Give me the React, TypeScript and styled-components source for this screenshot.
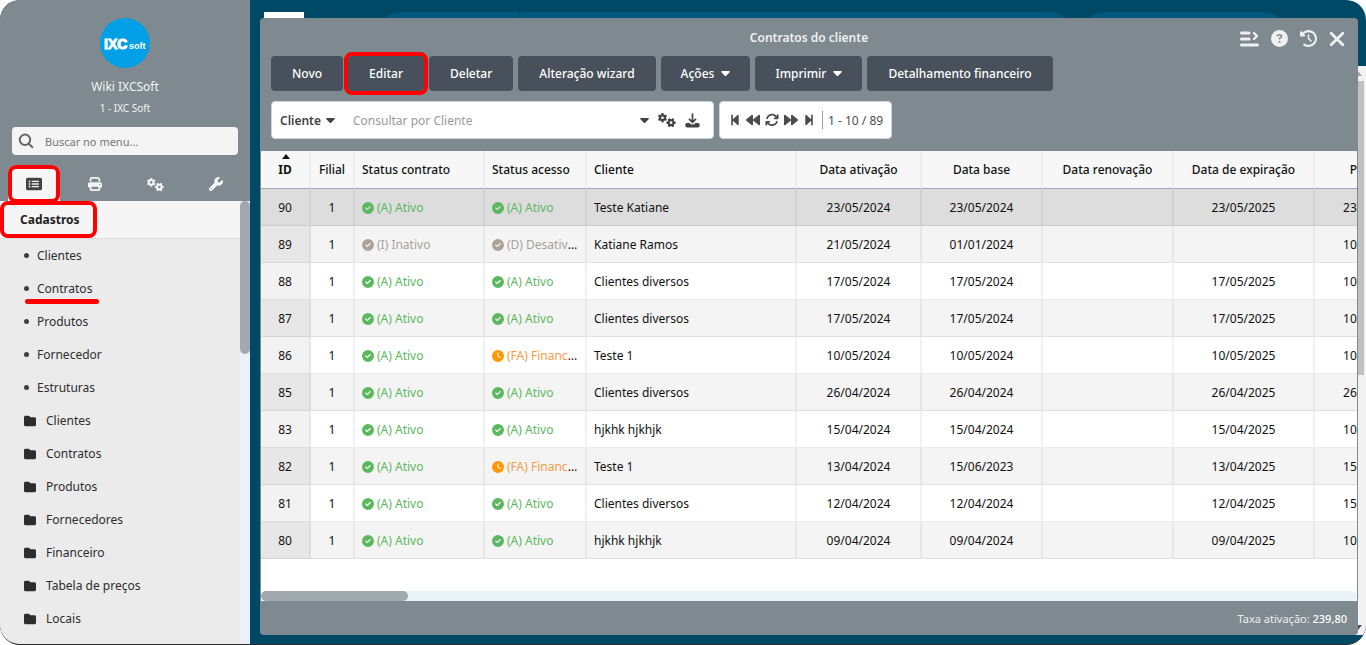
import React from "react";
import styled, { createGlobalStyle, css } from "styled-components";
import { FaBackward, FaForward, FaStepBackward, FaStepForward } from "react-icons/fa";
import { FaArrowsRotate, FaCircleCheck, FaCircleQuestion, FaClock, FaClockRotateLeft, FaFolder, FaGears, FaPrint, FaRectangleList, FaWrench } from "react-icons/fa6";

const GlobalStyle = createGlobalStyle`
  * { box-sizing: border-box; }
  body { margin: 0; background: #fff; font-family: "Noto Sans", "Open Sans", sans-serif; font-size: 12px; line-height: 16px; color: #111; }
  button, input, select { font: inherit; color: inherit; }
  ul { list-style: none; margin: 0; padding: 0; }
  h1, h2, p { margin: 0; }
`;

const Shell = styled.div`
  display: flex;
  height: 100vh;
  overflow: hidden;
  border-radius: 20px;
  border-bottom: 1px solid #2b2b2b;
  background: #004966;
`;

const Sidebar = styled.aside`
  display: flex;
  flex-direction: column;
  flex: 0 0 250px;
  background: #7e8a8f;
`;

const Profile = styled.div`
  display: flex;
  flex-direction: column;
  align-items: center;
  padding: 18px 12px 11px;
  color: #f4f4f4;
  text-align: center;
`;

const ProfileName = styled.h1`
  margin-top: 11px;
  font-size: 12px;
  line-height: 16px;
  font-weight: 400;
`;

const ProfileUnit = styled.p`
  margin-top: 5px;
  font-size: 10px;
  line-height: 16px;
`;

const SearchBox = styled.label`
  display: flex;
  align-items: center;
  gap: 11px;
  height: 28px;
  margin: 0 12px;
  padding: 0 6px;
  border-radius: 4px;
  background: #f4f4f4;
  color: #666;
`;

const PlainInput = styled.input`
  flex: 1;
  min-width: 0;
  padding: 2px 0 0;
  border: 0;
  outline: 0;
  background: transparent;
  &::placeholder { color: #999; opacity: 1; }
`;

const MenuInput = styled(PlainInput)`
  font-size: 11px;
  &::placeholder { color: #757575; }
`;

const Tabs = styled.nav`
  display: flex;
  justify-content: space-between;
  align-items: flex-end;
  height: 46px;
  padding: 0 8px;
`;

const Tab = styled.button<{ $active?: boolean }>`
  position: relative;
  display: grid;
  place-items: center;
  width: 52px;
  height: 36px;
  padding: 2px 0 0;
  border: 0;
  background: ${(p) => (p.$active ? "#f5f5f5" : "transparent")};
  color: ${(p) => (p.$active ? "#444" : "#f5f5f5")};
  border-radius: 8px 8px 0 0;
`;

const Highlight = styled.span`
  position: absolute;
  inset: 0;
  z-index: 2;
  border: 4px solid #f00;
  border-radius: 8px;
  pointer-events: none;
`;

const TabHighlight = styled(Highlight)`
  bottom: -2px;
`;

const ButtonHighlight = styled(Highlight)`
  inset: -4px;
`;

const MenuArea = styled.div`
  position: relative;
  display: flex;
  flex: 1;
  min-height: 0;
`;

const MenuScroll = styled.div`
  flex: 1;
  min-width: 0;
  overflow: hidden;
  background: #ebebeb;
`;

const MenuTitle = styled.h2`
  height: 38px;
  border-bottom: 1px solid #dcdcdc;
  background: #f5f5f5;
  font-size: 12px;
  line-height: 37px;
  font-weight: 700;
  color: #222;
`;

const TitleMark = styled.span`
  position: relative;
  display: inline-block;
  padding: 0 17px 0 20px;
`;

const MenuLink = styled.a<{ $folder?: boolean }>`
  display: flex;
  align-items: center;
  gap: ${(p) => (p.$folder ? 10 : 8)}px;
  height: 33px;
  padding-left: 24px;
  color: #2d2d2d;
  text-decoration: none;
`;

const Dot = styled.span`
  width: 5px;
  height: 5px;
  border-radius: 50%;
  background: #3f3f3f;
`;

const Marked = styled.span`
  position: relative;
`;

const Underline = styled.span`
  position: absolute;
  left: -12px;
  right: -7px;
  bottom: -7px;
  height: 5px;
  border-radius: 3px;
  background: #f00;
`;

const MenuRail = styled.div`
  flex: 0 0 10px;
  background: #e9f2f6;
`;

const MenuThumb = styled.div`
  height: 153px;
  border-radius: 5px;
  background: #a0a9ae;
`;

const Main = styled.main`
  position: relative;
  display: flex;
  flex: 1;
  min-width: 0;
  padding: 18px 8px 9px 10px;
`;

const Pill = styled.div<{ $left: number; $width: number }>`
  position: absolute;
  top: 12px;
  left: ${(p) => p.$left}px;
  width: ${(p) => p.$width}px;
  height: 40px;
  border-radius: 20px;
  background: #005780;
`;

const PillDivider = styled.span`
  display: block;
  width: 1px;
  height: 40px;
  margin-left: 139px;
  background: #00496b;
`;

const BrandBlock = styled.div`
  position: absolute;
  top: 12px;
  left: 14px;
  width: 40px;
  height: 40px;
  background: #fff;
`;

const PageRail = styled.div`
  position: absolute;
  top: 66px;
  right: 0;
  bottom: 9px;
  display: flex;
  flex-direction: column;
  align-items: center;
  width: 16px;
  padding: 5px 0;
  background: #f2f2f2;
`;

const PageThumb = styled.div`
  flex: 0 0 294px;
  width: 12px;
  margin: 5px 0 auto;
  background: #c1c1c1;
`;

const RailArrow = styled.svg<{ $dark?: boolean }>`
  flex: none;
  fill: ${(p) => (p.$dark ? "#505050" : "#a3a3a3")};
`;

const Window = styled.section`
  position: relative;
  display: flex;
  flex-direction: column;
  flex: 1;
  min-width: 0;
  border-radius: 4px;
  background: #7e8a8f;
  overflow: hidden;
`;

const TitleBar = styled.header`
  position: relative;
  flex: none;
  height: 38px;
  padding-top: 12px;
  text-align: center;
  color: #f0f0f0;
`;

const WindowTitle = styled.h2`
  font-size: 12px;
  line-height: 16px;
  font-weight: 600;
`;

const WindowActions = styled.div`
  position: absolute;
  top: 12px;
  right: 13px;
  display: flex;
  align-items: center;
  gap: 12px;
`;

const IconButton = styled.button`
  display: grid;
  place-items: center;
  padding: 0;
  border: 0;
  background: transparent;
  color: inherit;
`;

const Toolbar = styled.div`
  display: flex;
  gap: 5px;
  padding: 0 11px;
`;

const ToolButton = styled.button<{ $menu?: boolean }>`
  position: relative;
  display: flex;
  align-items: center;
  gap: 7px;
  height: 35px;
  padding: 0 ${(p) => (p.$menu ? 20 : 21)}px;
  border: 0;
  border-radius: 4px;
  background: #47505b;
  color: #fff;
  font-weight: 500;
  white-space: nowrap;
`;

const Filters = styled.div`
  display: flex;
  gap: 5px;
  padding: 10px 11px 12px;
`;

const panel = css`
  display: flex;
  align-items: center;
  height: 38px;
  border: 1px solid #d0d4d6;
  border-radius: 4px;
  background: #fff;
  color: #444;
`;

const SearchPanel = styled.div`
  ${panel}
  flex: 0 1 443px;
  gap: 9px;
  padding: 0 13px 0 8px;
`;

const FieldPicker = styled.label`
  display: flex;
  align-items: center;
  gap: 4px;
  margin-right: 9px;
`;

const FieldSelect = styled.select`
  appearance: none;
  padding: 2px 0 0;
  border: 0;
  background: transparent;
  font-weight: 600;
`;

const Pager = styled.div`
  ${panel}
  gap: 5px;
  padding: 0 8px 0 9px;
  color: #4c4c4c;
`;

const PageCount = styled.span`
  margin-left: 2px;
  padding: 2px 0 0 5px;
  border-left: 1px solid #999;
`;

const TableArea = styled.div`
  display: flex;
  flex-direction: column;
  flex: 1;
  min-height: 0;
  margin: 0 1px;
  background: #fff;
`;

const TableClip = styled.div`
  flex: 1;
  min-height: 0;
  overflow: hidden;
`;

const Grid = styled.table`
  width: 1176px;
  table-layout: fixed;
  border-collapse: separate;
  border-spacing: 0;
`;

const Th = styled.th<{ $left?: boolean; $sorted?: boolean }>`
  position: relative;
  height: 38px;
  padding: ${(p) => (p.$left ? "0 5px 0 7px" : "0 7px")};
  border-right: 2px solid #ececec;
  border-bottom: 1px solid #9aa7ac;
  background: #f7f7f7;
  font-weight: ${(p) => (p.$sorted ? 700 : 500)};
  text-align: ${(p) => (p.$left ? "left" : "center")};
  white-space: nowrap;
`;

const SortMark = styled.svg`
  position: absolute;
  top: 3px;
  left: 21px;
  fill: #111;
`;

const Td = styled.td<{ $left?: boolean }>`
  height: 37px;
  padding: ${(p) => (p.$left ? "2px 5px 0 7px" : "2px 7px 0")};
  border-right: 2px solid rgba(0, 0, 0, 0.05);
  border-bottom: 1px solid rgba(0, 0, 0, 0.08);
  text-align: ${(p) => (p.$left ? "left" : "center")};
  white-space: nowrap;
  overflow: hidden;
  text-overflow: ellipsis;
`;

const Row = styled.tr<{ $selected?: boolean }>`
  background: #fff;
  &:nth-child(even) { background: #f4f4f4; }
  ${(p) => p.$selected && css`background: #ddd;`}
  & > td:first-child { background: ${(p) => (p.$selected ? "#ddd" : "rgba(0, 0, 0, 0.05)")}; }
`;

const tones = { green: "#5cb860", grey: "#aba397", orange: "#ff9800" };
const textTones = { green: "#5cb860", grey: "#a8a29b", orange: "#f79b45" };
type Tone = keyof typeof tones;

const StatusText = styled.span<{ $tone: Tone }>`
  color: ${(p) => textTones[p.$tone]};
  svg { margin-right: 3px; vertical-align: -2px; color: ${(p) => tones[p.$tone]}; }
`;

const HRail = styled.div`
  flex: none;
  height: 10px;
  border-radius: 5px;
  background: #e9f2f6;
`;

const HThumb = styled.div`
  width: 147px;
  height: 10px;
  border-radius: 5px;
  background: #a0a9ae;
`;

const Footer = styled.footer`
  flex: none;
  height: 34px;
  padding: 10px 11px 0;
  color: #eee;
  font-size: 11px;
  line-height: 16px;
  text-align: right;
  strong { font-weight: 500; color: #fff; }
`;

const Logo = () => (
  <svg width="50" height="50" viewBox="0 0 50 50" role="img" aria-label="IXCsoft">
    <circle cx="25" cy="25" r="25" fill="#009fe6" />
    <text x="4" y="31" fill="#fff" stroke="#fff" strokeWidth="1" fontFamily="Liberation Sans, sans-serif" fontWeight="700" fontSize="14">IXC</text>
    <text x="29" y="31" fill="#fff" fontFamily="Liberation Sans, sans-serif" fontWeight="700" fontSize="9">soft</text>
  </svg>
);

const SearchIcon = () => (
  <svg width="16" height="16" viewBox="0 0 16 16" fill="none" stroke="currentColor" strokeWidth="2" strokeLinecap="round">
    <circle cx="7" cy="6.8" r="5.2" /><path d="M10.8 10.8l3.6 3.4" />
  </svg>
);

const Caret = () => (
  <svg width="9" height="5" viewBox="0 0 9 5" fill="currentColor"><path d="M.9 0h7.2c.7 0 1 .7.5 1.2L5.2 4.7a1 1 0 0 1-1.4 0L.4 1.2C-.1.7.2 0 .9 0z" /></svg>
);

const ListNextIcon = () => (
  <svg width="19" height="16" viewBox="0 0 19 16" fill="none" stroke="currentColor" strokeWidth="3" strokeLinecap="round" strokeLinejoin="round">
    <path d="M1.5 2h7.5M1.5 8h7.5M1.5 14h16" /><path d="M14 2l3 3-3 3" strokeWidth="2.4" />
  </svg>
);

const CloseIcon = () => (
  <svg width="16" height="16" viewBox="0 0 16 16" stroke="currentColor" strokeWidth="2.8" strokeLinecap="round"><path d="M2.2 2.2l11.6 11.6M13.8 2.2L2.2 13.8" /></svg>
);

const DownloadIcon = () => (
  <svg width="15" height="15" viewBox="0 0 15 15" fill="none" stroke="currentColor">
    <path d="M7.5.5v8.5M4 5.8l3.5 3.5L11 5.8" strokeWidth="1.7" />
    <path d="M2 10.5h2.6l1.5 1.4h2.8l1.5-1.4H13a1.2 1.2 0 0 1 1.2 1.2v1A1.2 1.2 0 0 1 13 14H2a1.2 1.2 0 0 1-1.2-1.2v-1A1.2 1.2 0 0 1 2 10.5z" fill="currentColor" strokeWidth="1" />
  </svg>
);

const links = ["Clientes", "Contratos", "Produtos", "Fornecedor", "Estruturas"];
const folders = ["Clientes", "Contratos", "Produtos", "Fornecedores", "Financeiro", "Tabela de preços", "Locais"];
const widths = [50, 44, 130, 102, 210, 125, 121, 131, 141, 122];

type Contract = { id: number; status: [Tone, string]; access: [Tone, string]; client: string; start: string; base: string; expiry: string; next: string };
const active: [Tone, string] = ["green", "(A) Ativo"];
const blocked: [Tone, string] = ["orange", "(FA) Financeiro"];
const contracts: Contract[] = [
  { id: 90, status: active, access: active, client: "Teste Katiane", start: "23/05/2024", base: "23/05/2024", expiry: "23/05/2025", next: "23/05/2024" },
  { id: 89, status: ["grey", "(I) Inativo"], access: ["grey", "(D) Desativado"], client: "Katiane Ramos", start: "21/05/2024", base: "01/01/2024", expiry: "", next: "10/05/2024" },
  { id: 88, status: active, access: active, client: "Clientes diversos", start: "17/05/2024", base: "17/05/2024", expiry: "17/05/2025", next: "10/05/2024" },
  { id: 87, status: active, access: active, client: "Clientes diversos", start: "17/05/2024", base: "17/05/2024", expiry: "17/05/2025", next: "10/05/2024" },
  { id: 86, status: active, access: blocked, client: "Teste 1", start: "10/05/2024", base: "10/05/2024", expiry: "10/05/2025", next: "10/05/2024" },
  { id: 85, status: active, access: active, client: "Clientes diversos", start: "26/04/2024", base: "26/04/2024", expiry: "26/04/2025", next: "26/05/2024" },
  { id: 83, status: active, access: active, client: "hjkhk hjkhjk", start: "15/04/2024", base: "15/04/2024", expiry: "15/04/2025", next: "10/05/2024" },
  { id: 82, status: active, access: blocked, client: "Teste 1", start: "13/04/2024", base: "15/06/2023", expiry: "13/04/2025", next: "15/05/2024" },
  { id: 81, status: active, access: active, client: "Clientes diversos", start: "12/04/2024", base: "12/04/2024", expiry: "12/04/2025", next: "15/05/2024" },
  { id: 80, status: active, access: active, client: "hjkhk hjkhjk", start: "09/04/2024", base: "09/04/2024", expiry: "09/04/2025", next: "10/05/2024" },
];

const Status = ({ value: [tone, label] }: { value: [Tone, string] }) => (
  <StatusText $tone={tone}>{tone === "orange" ? <FaClock size={12} /> : <FaCircleCheck size={12} />}{label}</StatusText>
);

export default function App() {
  return (
    <>
      <GlobalStyle />
      <Shell>
        <Sidebar>
          <Profile>
            <Logo />
            <ProfileName>Wiki IXCSoft</ProfileName>
            <ProfileUnit>1 - IXC Soft</ProfileUnit>
          </Profile>
          <SearchBox>
            <SearchIcon />
            <MenuInput aria-label="Buscar no menu" placeholder="Buscar no menu..." />
          </SearchBox>
          <Tabs>
            <Tab $active aria-label="Menu"><FaRectangleList size={16} /><TabHighlight /></Tab>
            <Tab aria-label="Imprimir"><FaPrint size={14} /></Tab>
            <Tab aria-label="Configurações"><FaGears size={17} /></Tab>
            <Tab aria-label="Ferramentas"><FaWrench size={14} /></Tab>
          </Tabs>
          <MenuArea>
            <MenuScroll>
              <MenuTitle><TitleMark>Cadastros<Highlight /></TitleMark></MenuTitle>
              <ul>
                {links.map((name) => (
                  <li key={name}><MenuLink href="#"><Dot /><Marked>{name}{name === "Contratos" && <Underline />}</Marked></MenuLink></li>
                ))}
                {folders.map((name) => (
                  <li key={name}><MenuLink href="#" $folder><FaFolder size={12} />{name}</MenuLink></li>
                ))}
              </ul>
            </MenuScroll>
            <MenuRail><MenuThumb /></MenuRail>
          </MenuArea>
        </Sidebar>
        <Main>
          <BrandBlock />
          <Pill $left={130} $width={690}><PillDivider /></Pill>
          <Pill $left={834} $width={200} />
          <PageRail>
            <RailArrow width="8" height="5" viewBox="0 0 8 5"><path d="M4 0l4 5H0z" /></RailArrow>
            <PageThumb />
            <RailArrow $dark width="8" height="5" viewBox="0 0 8 5"><path d="M0 0h8L4 5z" /></RailArrow>
          </PageRail>
          <Window>
            <TitleBar>
              <WindowTitle>Contratos do cliente</WindowTitle>
              <WindowActions>
                <IconButton aria-label="Opções"><ListNextIcon /></IconButton>
                <IconButton aria-label="Ajuda"><FaCircleQuestion size={17} /></IconButton>
                <IconButton aria-label="Histórico"><FaClockRotateLeft size={17} /></IconButton>
                <IconButton aria-label="Fechar"><CloseIcon /></IconButton>
              </WindowActions>
            </TitleBar>
            <Toolbar>
              <ToolButton>Novo</ToolButton>
              <ToolButton>Editar<ButtonHighlight /></ToolButton>
              <ToolButton>Deletar</ToolButton>
              <ToolButton>Alteração wizard</ToolButton>
              <ToolButton $menu>Ações <Caret /></ToolButton>
              <ToolButton $menu>Imprimir <Caret /></ToolButton>
              <ToolButton>Detalhamento financeiro</ToolButton>
            </Toolbar>
            <Filters>
              <SearchPanel>
                <FieldPicker>
                  <FieldSelect aria-label="Campo"><option>Cliente</option></FieldSelect>
                  <Caret />
                </FieldPicker>
                <PlainInput aria-label="Consultar por Cliente" placeholder="Consultar por Cliente" />
                <IconButton aria-label="Abrir lista"><Caret /></IconButton>
                <IconButton aria-label="Configurar"><FaGears size={18} /></IconButton>
                <IconButton aria-label="Baixar"><DownloadIcon /></IconButton>
              </SearchPanel>
              <Pager>
                <IconButton aria-label="Primeira"><FaStepBackward size={12} /></IconButton>
                <IconButton aria-label="Anterior"><FaBackward size={14} /></IconButton>
                <IconButton aria-label="Atualizar"><FaArrowsRotate size={14} /></IconButton>
                <IconButton aria-label="Próxima"><FaForward size={14} /></IconButton>
                <IconButton aria-label="Última"><FaStepForward size={12} /></IconButton>
                <PageCount>1 - 10 / 89</PageCount>
              </Pager>
            </Filters>
            <TableArea>
              <TableClip>
                <Grid>
                  <colgroup>{widths.map((w, i) => <col key={i} width={w} />)}</colgroup>
                  <thead>
                    <tr>
                      <Th $sorted><SortMark width="8" height="5" viewBox="0 0 8 5"><path d="M4 0l4 5H0z" /></SortMark>ID</Th>
                      <Th>Filial</Th>
                      <Th $left>Status contrato</Th>
                      <Th $left>Status acesso</Th>
                      <Th $left>Cliente</Th>
                      <Th>Data ativação</Th>
                      <Th>Data base</Th>
                      <Th>Data renovação</Th>
                      <Th>Data de expiração</Th>
                      <Th>Pago até</Th>
                    </tr>
                  </thead>
                  <tbody>
                    {contracts.map((c, i) => (
                      <Row key={c.id} $selected={i === 0}>
                        <Td>{c.id}</Td>
                        <Td>1</Td>
                        <Td $left><Status value={c.status} /></Td>
                        <Td $left><Status value={c.access} /></Td>
                        <Td $left>{c.client}</Td>
                        <Td>{c.start}</Td>
                        <Td>{c.base}</Td>
                        <Td />
                        <Td>{c.expiry}</Td>
                        <Td>{c.next}</Td>
                      </Row>
                    ))}
                  </tbody>
                </Grid>
              </TableClip>
              <HRail><HThumb /></HRail>
            </TableArea>
            <Footer>Taxa ativação: <strong>239,80</strong></Footer>
          </Window>
        </Main>
      </Shell>
    </>
  );
}
